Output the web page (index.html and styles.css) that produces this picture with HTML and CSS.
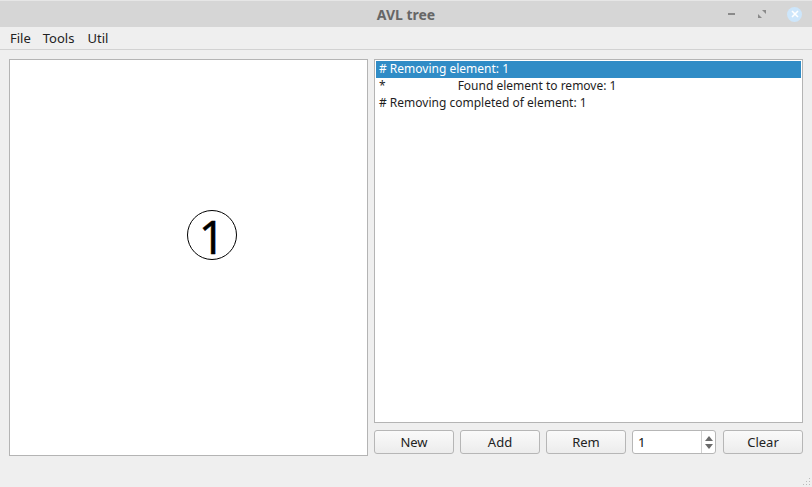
FILE: index.html
```html
<!DOCTYPE html>
<html>
<head>
	<title>AVL tree</title>
	<link rel="stylesheet" href="styles.css">
</head>
<body>

	<div class="window">

		<div class="titlebar">
			<span class="title">AVL tree</span>
			<div class="controls">
				<span class="btn-min"></span>
				<svg class="btn-max" width="10" height="10" viewBox="0 0 10 10">
					<path d="M5 1 H9 V5 Z" fill="#8a8a8a"/>
					<path d="M1 5 V9 H5 Z" fill="#8a8a8a"/>
				</svg>
				<span class="btn-close">
					<svg width="8" height="8" viewBox="0 0 8 8">
						<path d="M1 1 L7 7 M7 1 L1 7" stroke="#fff" stroke-width="1.6"/>
					</svg>
				</span>
			</div>
		</div>

		<div class="menubar">
			<span>File</span>
			<span>Tools</span>
			<span>Util</span>
		</div>

		<div class="main">
			<div class="canvas">
				<div class="node" style="left:177px;top:150px;">1</div>
			</div>

			<div class="side">
				<div class="log">
					<div class="row selected"># Removing element: 1</div>
					<div class="row">*<span class="indent">Found element to remove: 1</span></div>
					<div class="row"># Removing completed of element: 1</div>
				</div>

				<div class="buttons">
					<button class="b-new">New</button>
					<button class="b-add">Add</button>
					<button class="b-rem">Rem</button>
					<div class="spin">
						<span class="spin-val">1</span>
						<span class="arrows">
							<svg width="8" height="5" viewBox="0 0 8 5"><path d="M0 5 L4 0 L8 5 Z" fill="#6b6b6b"/></svg>
							<svg width="8" height="5" viewBox="0 0 8 5"><path d="M0 0 L4 5 L8 0 Z" fill="#6b6b6b"/></svg>
						</span>
					</div>
					<button class="b-clear">Clear</button>
				</div>
			</div>
		</div>

		<svg class="grip" width="10" height="10" viewBox="0 0 10 10">
			<rect x="8" y="2" width="1" height="1" fill="#bbb"/>
			<rect x="5" y="5" width="1" height="1" fill="#bbb"/>
			<rect x="8" y="5" width="1" height="1" fill="#bbb"/>
			<rect x="2" y="8" width="1" height="1" fill="#bbb"/>
			<rect x="5" y="8" width="1" height="1" fill="#bbb"/>
			<rect x="8" y="8" width="1" height="1" fill="#bbb"/>
		</svg>

	</div>

</body>
</html>
```

FILE: styles.css
```css
html, body {margin:0;padding:0;}
body {background:#efefef;font:normal 12px "Noto Sans", "Open Sans", sans-serif;color:#1e1e1e;}

.window {position:relative;width:812px;height:487px;overflow:hidden;background:#efefef;}

.titlebar {height:27px;background:#d6d6d6;display:flex;align-items:center;justify-content:center;position:relative;border-top:1px solid #e6e6e6;box-sizing:border-box;}
.titlebar .title {font:bold 14px "Noto Sans", sans-serif;color:#666;letter-spacing:0;}
.controls {position:absolute;right:10px;top:0;height:26px;display:flex;align-items:center;}
.controls .btn-min {display:inline-block;width:7px;height:2px;background:#8a8a8a;margin-right:22px;}
.controls .btn-max {margin-right:20px;}
.controls .btn-close {display:inline-flex;align-items:center;justify-content:center;width:15px;height:15px;border-radius:50%;background:#cde6fb;}

.menubar {height:22px;background:#efefef;border-bottom:1px solid #d2d2d2;display:flex;align-items:center;padding-left:10px;font-size:13px;color:#222;}
.menubar span {margin-right:12px;}
.menubar span:nth-child(2) {margin-right:13px;}

.main {display:flex;padding:9px 0 0 9px;}
.canvas {width:359px;height:397px;background:#fff;border:1px solid #b4b4b4;box-sizing:border-box;position:relative;}
.canvas .node {position:absolute;width:50px;height:50px;border:1px solid #000;border-radius:50%;box-sizing:border-box;background:#fff;display:flex;align-items:center;justify-content:center;font-family:"Noto Sans", sans-serif;font-size:46px;line-height:1;color:#000;padding-top:1px;-webkit-text-stroke:0.4px #000;}

.side {margin-left:6px;width:429px;}
.log {height:364px;background:#fff;border:1px solid #b4b4b4;box-sizing:border-box;padding:1px;}
.log .row {height:17px;line-height:16px;padding-left:3px;white-space:pre;}
.log .row.selected {background:#308cc6;color:#fff;}
.log .indent {margin-left:72px;}

.buttons {display:flex;margin-top:7px;height:24px;}
.buttons button {height:24px;width:80px;margin-right:6px;background:linear-gradient(#fafafa, #ececec);border:1px solid #b6b6b6;border-radius:3px;font:normal 13px "Noto Sans", sans-serif;color:#222;padding:0 0 1px 0;}
.buttons .b-clear {margin-right:0;margin-left:1px;}
.spin {width:84px;height:24px;margin-right:6px;background:#fff;border:1px solid #b6b6b6;border-radius:3px;box-sizing:border-box;display:flex;align-items:center;}
.spin .spin-val {flex:1;padding-left:5px;font-size:13px;color:#111;}
.spin .arrows {width:13px;height:22px;border-left:1px solid #cfcfcf;display:flex;flex-direction:column;align-items:center;justify-content:center;gap:3px;}

.grip {position:absolute;right:1px;bottom:1px;}
```
